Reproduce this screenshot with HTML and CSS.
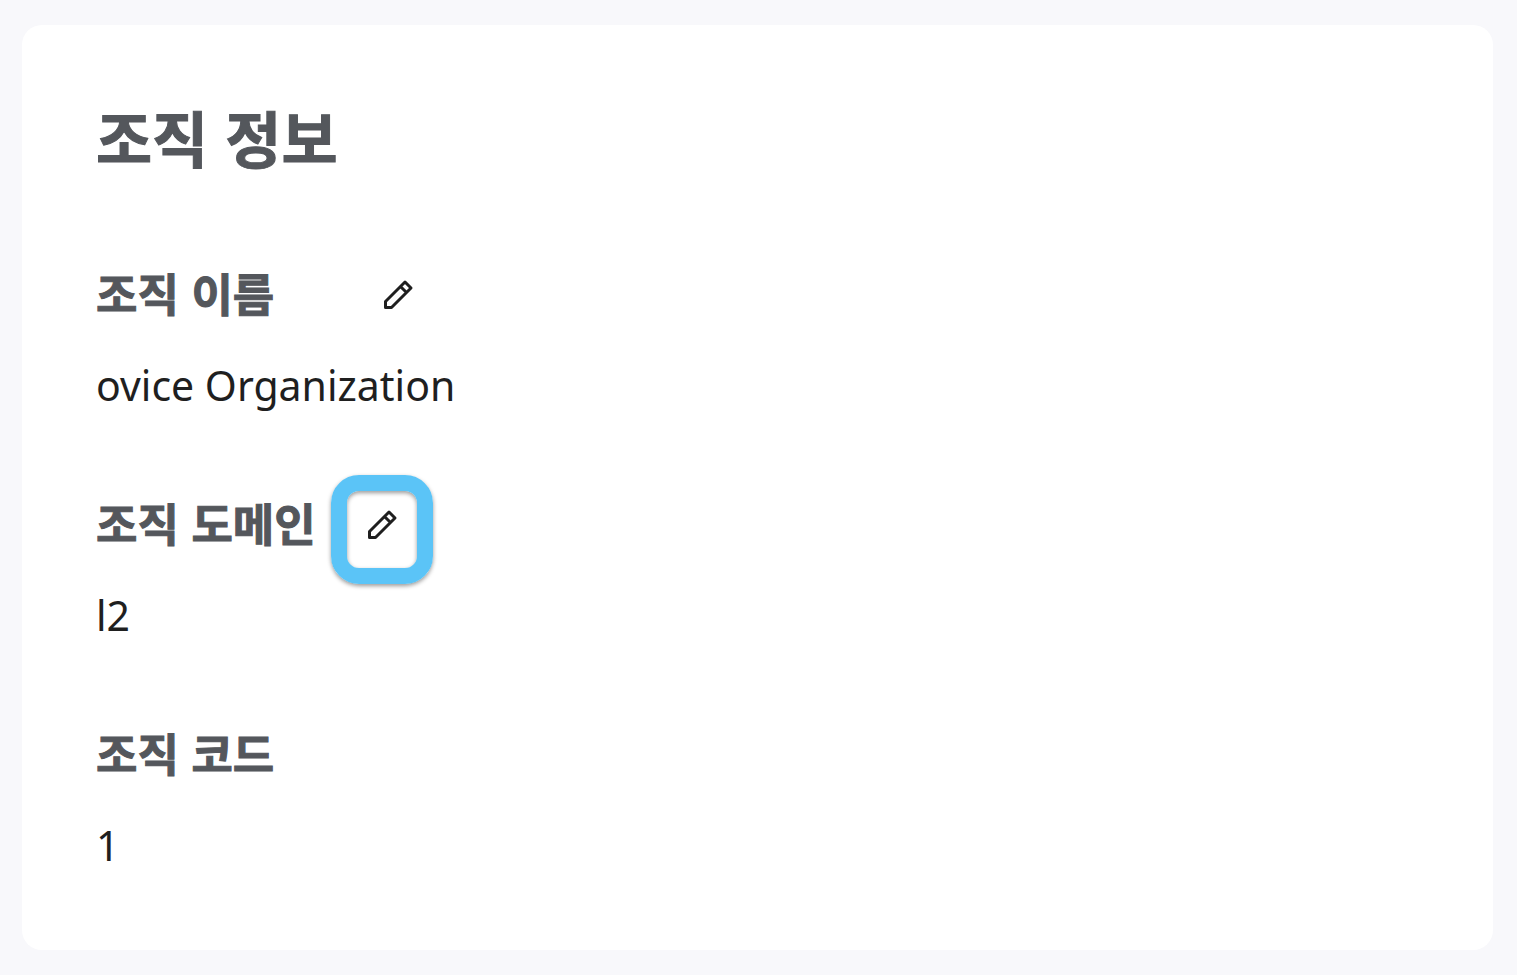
FILE: index.html
```html
<!DOCTYPE html>
<html lang="ko">
<head>
    <meta charset="UTF-8">
    <meta name="viewport" content="width=device-width, initial-scale=1.0">
    <title>조직 정보</title>
    <link rel="stylesheet" href="styles.css">
</head>
<body>
    <main class="card">
        <h1 class="card-title">조직 정보</h1>

        <section class="field">
            <div class="field-header">
                <h2 class="field-label">조직 이름</h2>
                <button class="edit-button edit-name" type="button" aria-label="조직 이름 편집">
                    <svg class="pencil" viewBox="0 0 32 32">
                        <path d="M3.5 28.5v-6L23 3l6 6L9.5 28.5zM18.5 7.5l6 6"/>
                    </svg>
                </button>
            </div>
            <p class="field-value">ovice Organization</p>
        </section>

        <section class="field">
            <div class="field-header">
                <h2 class="field-label">조직 도메인</h2>
                <button class="edit-button edit-domain" type="button" aria-label="조직 도메인 편집">
                    <svg class="pencil" viewBox="0 0 32 32">
                        <path d="M3.5 28.5v-6L23 3l6 6L9.5 28.5zM18.5 7.5l6 6"/>
                    </svg>
                    <span class="highlight"></span>
                </button>
            </div>
            <p class="field-value">l2</p>
        </section>

        <section class="field">
            <div class="field-header">
                <h2 class="field-label">조직 코드</h2>
            </div>
            <p class="field-value">1</p>
        </section>
    </main>
</body>
</html>
```

FILE: styles.css
```css
* {
    box-sizing: border-box;
}

body {
    margin: 0;
    padding: 25px 24px 25px 22px;
    background-color: #f8f8fb;
    color: #1f1f1f;
    font-family: "Noto Sans", "Noto Sans CJK KR", sans-serif;
}

.card {
    padding: 64px 74px 75px;
    border-radius: 20px;
    background-color: #fff;
}

.card-title,
.field-label {
    margin: 0;
    color: #54575c;
    font-family: "Noto Sans CJK KR", sans-serif;
    font-weight: 700;
    -webkit-text-stroke: 1px #54575c;
}

.card-title {
    font-size: 61px;
    line-height: 96px;
}

.field {
    margin-top: 73px;
}

.field-header {
    display: flex;
    align-items: center;
}

.field-label {
    font-size: 45px;
    line-height: 70px;
}

.field-value {
    margin: 27px 0 0;
    font-size: 41px;
    line-height: 60px;
}

.edit-button {
    position: relative;
    display: flex;
    padding: 4px 0 0;
    border: 0;
    background: none;
    cursor: pointer;
}

.edit-name {
    margin-left: 108px;
}

.edit-domain {
    margin-left: 50px;
}

.pencil {
    width: 32px;
    height: 32px;
    fill: none;
    stroke: #1f1f1f;
    stroke-width: 3;
    stroke-linejoin: round;
}

/* 강조 테두리 */
.highlight {
    position: absolute;
    top: -30px;
    left: -35px;
    width: 102px;
    height: 109px;
    border: 16px solid #5bc4f7;
    border-radius: 28px;
    box-shadow: 0 2px 4px rgba(0, 0, 0, 0.4), inset 0 2px 4px rgba(0, 0, 0, 0.4);
}
```
